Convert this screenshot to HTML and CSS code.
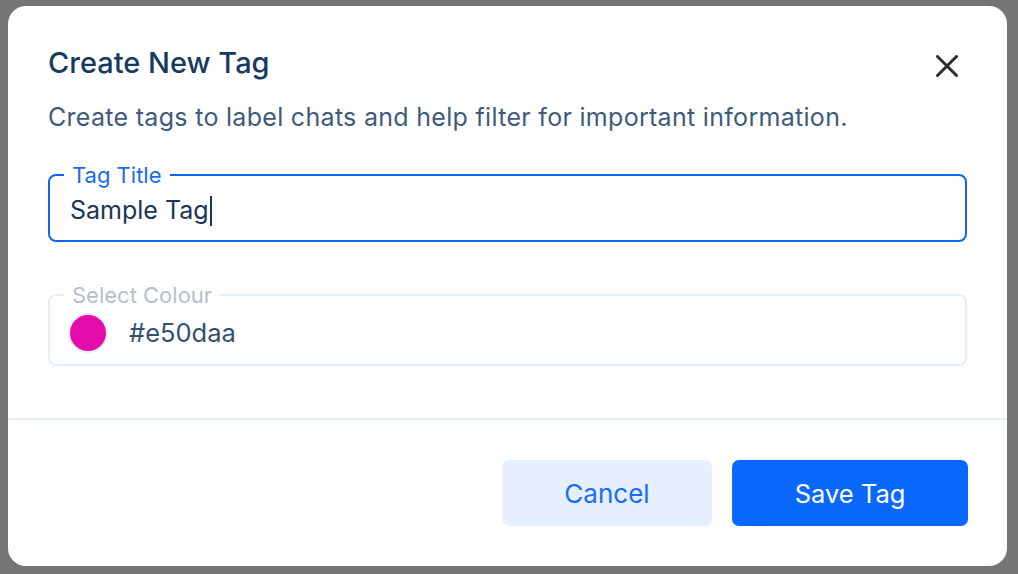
FILE: index.html
```html
<!DOCTYPE html>
<html lang="en">
<head>
<meta charset="utf-8">
<title>Create New Tag</title>
<link rel="stylesheet" href="styles.css">
</head>
<body>
<div class="dialog">
  <div class="dialog-body">
    <div class="header">
      <h2 class="title">Create New Tag</h2>
      <button class="close" aria-label="Close">
        <svg width="22" height="22" viewBox="0 0 22 22"><path d="M1.5 1.5L20.5 20.5M20.5 1.5L1.5 20.5" stroke="#2b2d30" stroke-width="3" stroke-linecap="round" fill="none"/></svg>
      </button>
    </div>
    <p class="subtitle">Create tags to label chats and help filter for important information.</p>
    <fieldset class="field field-active">
      <legend>Tag Title</legend>
      <div class="value">Sample Tag<span class="caret"></span></div>
    </fieldset>
    <fieldset class="field field-muted">
      <legend>Select Colour</legend>
      <div class="value colour-row"><span class="swatch"></span><span class="hex">#e50daa</span></div>
    </fieldset>
  </div>
  <div class="footer">
    <button class="btn btn-secondary">Cancel</button>
    <button class="btn btn-primary">Save Tag</button>
  </div>
</div>
</body>
</html>
```
FILE: styles.css
```css
html, body {
  margin: 0;
  padding: 0;
}
body {
  background: #757575;
  font-family: Inter, "Noto Sans", "Liberation Sans", sans-serif;
  height: 574px;
  overflow: hidden;
}
.dialog {
  margin: 6px 0 0 8px;
  width: 999px;
  height: 560px;
  background: #ffffff;
  border-radius: 18px;
  display: flex;
  flex-direction: column;
}
.dialog-body {
  padding: 0 40px 0 40px;
  border-bottom: 2px solid #e4eefa;
  height: 414px;
  box-sizing: border-box;
}
.header {
  display: flex;
  justify-content: space-between;
  align-items: center;
  padding-top: 40px;
}
.title {
  margin: 0;
  font-size: 29px;
  font-weight: 500;
  color: #173a5e;
  line-height: 34px;
}
.close {
  border: none;
  background: none;
  padding: 0;
  margin: 6px 9px 0 0;
  width: 22px;
  height: 22px;
  cursor: pointer;
}
.close svg {
  display: block;
}
.subtitle {
  margin: 22px 0 0 0;
  font-size: 25px;
  letter-spacing: 0.3px;
  line-height: 30px;
  color: #3e5b7b;
}
.field {
  margin: 0;
  border-radius: 8px;
  padding: 0 20px;
  box-sizing: border-box;
}
.field legend {
  padding: 0 8px;
  margin-left: -6px;
  font-size: 22px;
  line-height: 26px;
}
.field-active {
  margin-top: 30px;
  border: 2px solid #1266f1;
  height: 80px;
}
.field-active legend {
  color: #1a6af0;
}
.field-muted {
  margin-top: 40px;
  border: 2px solid #e6eef9;
  height: 84px;
}
.field-muted legend {
  color: #b3bfcc;
}
.value {
  font-size: 25px;
  color: #1b3654;
  line-height: 30px;
  margin-top: 7px;
}
.caret {
  display: inline-block;
  width: 2px;
  height: 30px;
  background: #1b3654;
  vertical-align: -7px;
  margin-left: 1px;
}
.colour-row {
  display: flex;
  align-items: center;
  margin-left: -2px;
  margin-top: 5px;
}
.swatch {
  width: 36px;
  height: 36px;
  border-radius: 50%;
  background: #e50daa;
  border: 2px solid #e8eefa;
  box-sizing: content-box;
}
.hex {
  margin-left: 21px;
  color: #33506f;
  font-size: 25.5px;
}
.footer {
  display: flex;
  justify-content: flex-end;
  gap: 20px;
  padding: 40px 39px 0 0;
}
.btn {
  height: 66px;
  border: none;
  border-radius: 7px;
  font-family: inherit;
  font-size: 26px;
  cursor: pointer;
}
.btn-secondary {
  width: 210px;
  background: #e5effd;
  color: #1a6cf6;
}
.btn-primary {
  width: 236px;
  background: #0b68ff;
  color: #ffffff;
  font-size: 25.5px;
}
```
